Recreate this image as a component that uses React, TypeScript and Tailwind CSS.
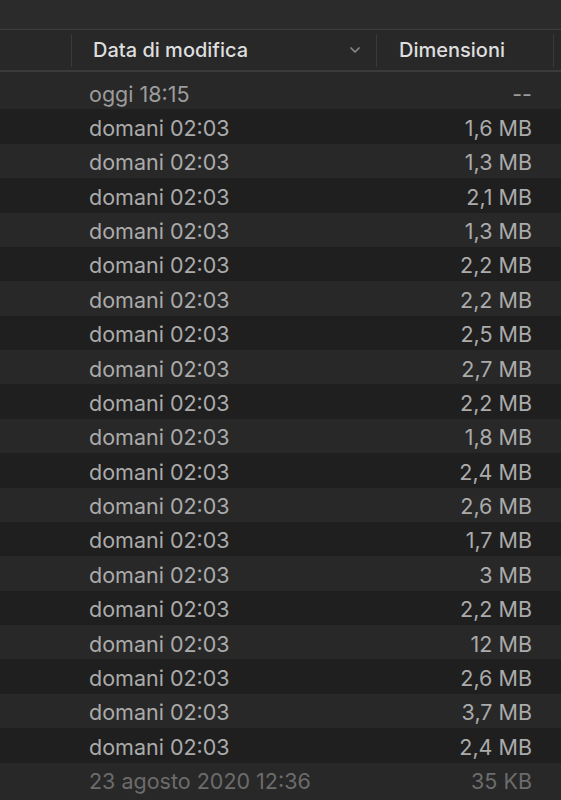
import { ChevronDown } from "lucide-react"

type Row = { date: string; size: string; tone?: "dim" | "faint" }

const rows: Row[] = [
  { date: "oggi 18:15", size: "--", tone: "dim" },
  { date: "domani 02:03", size: "1,6 MB" },
  { date: "domani 02:03", size: "1,3 MB" },
  { date: "domani 02:03", size: "2,1 MB" },
  { date: "domani 02:03", size: "1,3 MB" },
  { date: "domani 02:03", size: "2,2 MB" },
  { date: "domani 02:03", size: "2,2 MB" },
  { date: "domani 02:03", size: "2,5 MB" },
  { date: "domani 02:03", size: "2,7 MB" },
  { date: "domani 02:03", size: "2,2 MB" },
  { date: "domani 02:03", size: "1,8 MB" },
  { date: "domani 02:03", size: "2,4 MB" },
  { date: "domani 02:03", size: "2,6 MB" },
  { date: "domani 02:03", size: "1,7 MB" },
  { date: "domani 02:03", size: "3 MB" },
  { date: "domani 02:03", size: "2,2 MB" },
  { date: "domani 02:03", size: "12 MB" },
  { date: "domani 02:03", size: "2,6 MB" },
  { date: "domani 02:03", size: "3,7 MB" },
  { date: "domani 02:03", size: "2,4 MB" },
  { date: "23 agosto 2020 12:36", size: "35 KB", tone: "faint" },
]

function Separator() {
  return <div className="w-px h-[33px] bg-[#3a3a3a]" />
}

export default function App() {
  return (
    <div
      className="w-[561px] h-[800px] overflow-hidden bg-[#282828] select-none"
      style={{ fontFamily: "Inter, 'Noto Sans', sans-serif" }}
    >
      {/* toolbar strip */}
      <div className="h-[30px] bg-[#2b2b2b] border-b border-[#3d3d3d]" />

      {/* column headers */}
      <div className="h-[42px] flex items-center bg-[#282828] border-b-2 border-[#3a3a3a] text-[#dedede] text-[20px] font-medium">
        <div className="w-[71px]" />
        <Separator />
        <div className="w-[304px] flex items-center justify-between pl-[21px] pr-[13px]">
          <span>Data di modifica</span>
          <ChevronDown className="w-4 h-4 text-[#8a8a8a]" strokeWidth={2.5} />
        </div>
        <Separator />
        <div className="w-[176px] pl-[22px]">Dimensioni</div>
        <Separator />
      </div>

      {/* file rows */}
      <div className="pt-[3px] text-[21.5px]">
        {rows.map((r, i) => {
          const color =
            r.tone === "faint" ? "text-[#6c6c6c]" : r.tone === "dim" ? "text-[#9c9c9c]" : "text-[#ababab]"
          return (
            <div
              key={i}
              className={`h-[34.38px] flex items-center pt-[3px] ${i % 2 === 1 ? "bg-[#1f1f1f]" : "bg-[#282828]"} ${color}`}
            >
              <div className="w-[89px]" />
              <div className="flex-1">{r.date}</div>
              <div className="w-[120px] text-right pr-[29px]">{r.size}</div>
            </div>
          )
        })}
      </div>
    </div>
  )
}
